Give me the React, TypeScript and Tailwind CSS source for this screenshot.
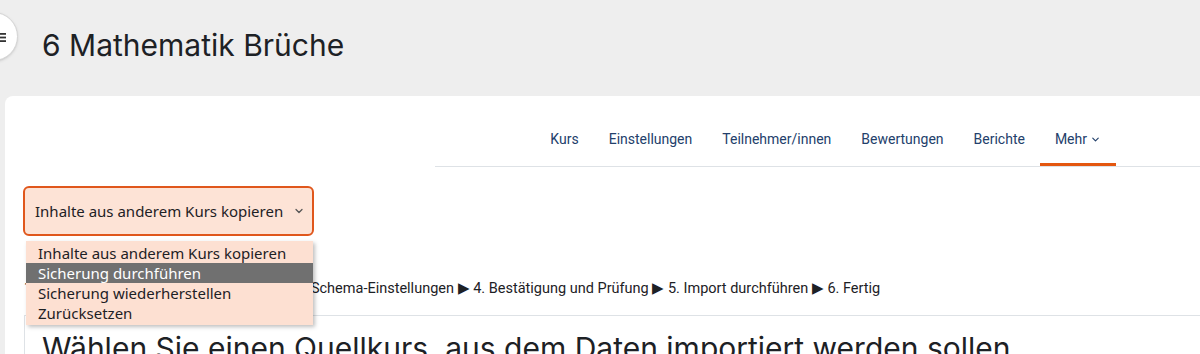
import React from "react";
import { ChevronDown } from "lucide-react";

const navItems = ["Kurs", "Einstellungen", "Teilnehmer/innen", "Bewertungen", "Berichte"];

const options = [
  "Inhalte aus anderem Kurs kopieren",
  "Sicherung durchführen",
  "Sicherung wiederherstellen",
  "Zurücksetzen",
];

const App: React.FC = () => {
  return (
    <div className="relative w-[1200px] h-[354px] overflow-hidden bg-[#eeeeee] text-[#1d2125]">
      {/* drawer toggle */}
      <button className="absolute left-[-31px] top-[12px] w-[49px] h-[49px] rounded-full bg-white border border-[#d5d5d5] shadow-sm">
        <svg className="absolute left-[29px] top-[19px]" width="8" height="11" viewBox="0 0 8 11">
          <rect x="0" y="1" width="7" height="1.8" fill="#333" />
          <rect x="0" y="4.6" width="7" height="1.8" fill="#333" />
          <rect x="0" y="8.2" width="7" height="1.8" fill="#333" />
        </svg>
      </button>

      <header className="h-[96px] pl-[42px] pt-[27px]">
        <h1 className="font-['Inter',sans-serif] text-[30px] leading-[36px] text-[#1d2125]">
          6 Mathematik Brüche
        </h1>
      </header>

      <div className="ml-[5px] h-[300px] bg-white rounded-tl-lg">
        <nav className="ml-[430px] pt-[21px]">
          <ul className="flex justify-end pr-[84px] border-b border-[#dee2e6] font-['Roboto',sans-serif] text-[14px] leading-[22px] text-[#23406b]">
            {navItems.map((item) => (
              <li key={item} className="px-[15px] pt-[11px] pb-[13px] border-b-[3px] border-transparent">
                {item}
              </li>
            ))}
            <li className="flex items-center gap-[3px] px-[15px] pt-[11px] pb-[13px] border-b-[3px] border-[#e4570f]">
              Mehr
              <ChevronDown size={11} strokeWidth={2.5} />
            </li>
          </ul>
        </nav>

        <div className="relative ml-[18px] mt-[19px] w-[291px]">
          <div className="flex items-center justify-between h-[50px] pl-[10px] pr-[7px] border-2 border-[#e0571c] rounded-[6px] bg-[#fde3d6] font-['Noto_Sans',sans-serif] text-[15px]">
            <span>Inhalte aus anderem Kurs kopieren</span>
            <ChevronDown size={12} strokeWidth={2.5} className="text-[#555]" />
          </div>
          <ul className="absolute left-[3px] top-[55px] w-[287px] pt-[2px] pb-[2px] bg-[#fde0d2] shadow-[2px_2px_4px_rgba(0,0,0,0.25)] font-['Noto_Sans',sans-serif] text-[15px] leading-[20px] z-10">
            {options.map((o, i) => (
              <li
                key={o}
                className={
                  i === 1
                    ? "h-[20px] pl-[12px] bg-[#707070] text-white"
                    : "h-[20px] pl-[12px] text-[#1d2125]"
                }
              >
                {o}
              </li>
            ))}
          </ul>
        </div>

        <p className="ml-[19px] mt-[43px] font-['Roboto',sans-serif] text-[14.5px] leading-[20px] text-[#1d2125] whitespace-nowrap">
          <span className="tracking-[-0.14px]">1. Kursauswahl ▶ 2. Grundeinstellungen ▶ 3. </span>
          Schema-Einstellungen ▶ 4. Bestätigung und Prüfung ▶ 5. Import durchführen ▶ 6. Fertig
        </p>

        <section className="ml-[19px] mt-[16px] pl-[17px] pt-[14px] border-t border-l border-[#dee2e6]">
          <h2 className="font-['Inter',sans-serif] text-[30px] leading-[36px] text-[#1d2125] whitespace-nowrap">
            Wählen Sie einen Quellkurs, aus dem Daten importiert werden sollen
          </h2>
        </section>
      </div>
    </div>
  );
};

export default App;
